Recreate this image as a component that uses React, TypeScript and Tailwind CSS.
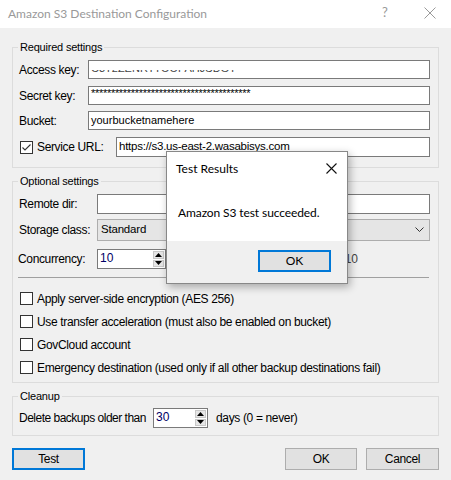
import React from "react";

const F = "font-['Liberation_Sans',Arial,sans-serif] text-[12px] tracking-[-0.35px]";

function Check({ checked = false }: { checked?: boolean }) {
  return (
    <div className="w-[13px] h-[13px] border border-[#333333] bg-white shrink-0 flex items-center justify-center">
      {checked && (
        <svg width="11" height="11" viewBox="0 0 11 11">
          <polyline points="1.5,5.5 4,8 9.5,2.5" fill="none" stroke="#333" strokeWidth="1.1" />
        </svg>
      )}
    </div>
  );
}

function Spin({ value, w }: { value: string; w: string }) {
  return (
    <div className={`${w} h-[20px] border border-[#7a7a7a] bg-white flex items-stretch shrink-0`}>
      <div className="flex-1 pl-[2px] pt-[2px] leading-[13px] text-[12px] tracking-normal text-[#000066]">{value}</div>
      <div className="w-[13px] flex flex-col gap-[1px] p-[1px]">
        <div className="flex-1 bg-[#e6e6e6] border border-[#c8c8c8] flex items-center justify-center">
          <svg width="7" height="4" viewBox="0 0 7 4"><polygon points="3.5,0 7,4 0,4" fill="#000" /></svg>
        </div>
        <div className="flex-1 bg-[#e6e6e6] border border-[#c8c8c8] flex items-center justify-center">
          <svg width="7" height="4" viewBox="0 0 7 4"><polygon points="0,0 7,0 3.5,4" fill="#000" /></svg>
        </div>
      </div>
    </div>
  );
}

function Group({ title, className, children }: { title: string; className: string; children: React.ReactNode }) {
  return (
    <div className={`relative ml-[12px] w-[427px] border border-[#dcdcdc] ${className}`}>
      <div className="absolute left-[5px] -top-[8px] px-[2px] bg-[#f0f0f0] leading-[14px] text-[11px] tracking-[-0.2px] text-black">{title}</div>
      {children}
    </div>
  );
}

function Button({ label, focused = false, w = "w-[73px]" }: { label: string; focused?: boolean; w?: string }) {
  return (
    <div
      className={`${w} h-[22px] flex items-center justify-center bg-[#e1e1e1] text-[12px] text-black ${
        focused ? "border-2 border-[#0078d7]" : "border border-[#adadad]"
      }`}
    >
      {label}
    </div>
  );
}

export default function App() {
  return (
    <div className={`relative w-[451px] h-[480px] bg-[#f0f0f0] overflow-hidden ${F} text-black`}>
      {/* Title bar */}
      <div className="h-[28px] bg-white flex items-center font-['Lato',sans-serif] text-[12px] tracking-normal text-[#999999]">
        <div className="pl-[8px] flex-1 -mt-[1px]">Amazon S3 Destination Configuration</div>
        <div className="w-[14px] text-[13px] text-[#999999] mr-[28px] -mt-[2px]">?</div>
        <svg width="12" height="12" viewBox="0 0 12 12" className="mr-[15px] -mt-[2px]">
          <path d="M0.5 0.5 L11.5 11.5 M11.5 0.5 L0.5 11.5" stroke="#9a9a9a" strokeWidth="1" />
        </svg>
      </div>

      {/* Required settings */}
      <Group title="Required settings" className="mt-[19px] h-[121px]">
        <div className="pt-[12px] pl-[6px] flex flex-col">
          <div className="flex items-center h-[19px]">
            <div className="w-[69px]">Access key:</div>
            <div className="w-[342px] h-[19px] border border-[#7a7a7a] bg-white pl-[2px] pt-[9px]">
              <div className="h-[3px] overflow-hidden">
                <div className="-mt-[8px] leading-[12px] text-[11px] tracking-normal text-[#444]">C3T2ZENRTTOOPAHJSDGT</div>
              </div>
            </div>
          </div>
          <div className="flex items-center h-[19px] mt-[7px]">
            <div className="w-[69px]">Secret key:</div>
            <div className="w-[342px] h-[19px] border border-[#7a7a7a] bg-white pl-[2px] leading-[12px] text-[11px] tracking-[-0.3px]">
              ****************************************
            </div>
          </div>
          <div className="flex items-center h-[19px] mt-[6px]">
            <div className="w-[69px]">Bucket:</div>
            <div className="w-[342px] h-[19px] border border-[#7a7a7a] bg-white pl-[2px] leading-[16px] text-[11px] tracking-normal">
              yourbucketnamehere
            </div>
          </div>
          <div className="flex items-center h-[20px] mt-[7px]">
            <div className="ml-[1px]"><Check checked /></div>
            <div className="ml-[4px] w-[79px]">Service URL:</div>
            <div className="w-[314px] h-[20px] border border-[#7a7a7a] bg-white pl-[2px] leading-[17px] text-[11.5px] tracking-[-0.25px]">
              https://s3.us-east-2.wasabisys.com
            </div>
          </div>
        </div>
      </Group>

      {/* Optional settings */}
      <Group title="Optional settings" className="mt-[13px] h-[202px]">
        <div className="pt-[12px] pl-[6px] flex flex-col">
          <div className="flex items-center h-[20px]">
            <div className="w-[78px]">Remote dir:</div>
            <div className="w-[333px] h-[20px] border border-[#7a7a7a] bg-white" />
          </div>
          <div className="flex items-center h-[22px] mt-[5px]">
            <div className="w-[78px]">Storage class:</div>
            <div className="w-[333px] h-[22px] border border-[#adadad] bg-[#e5e5e5] flex items-center pl-[3px] pr-[5px]">
              <div className="flex-1 text-[11.5px] tracking-[-0.2px]">Standard</div>
              <svg width="9" height="6" viewBox="0 0 9 6"><polyline points="0.5,0.5 4.5,4.5 8.5,0.5" fill="none" stroke="#333" strokeWidth="1" /></svg>
            </div>
          </div>
          <div className="flex items-center h-[20px] mt-[8px]">
            <div className="w-[78px] -ml-[1px] mr-[1px]">Concurrency:</div>
            <Spin value="10" w="w-[69px]" />
            <div className="w-[192px] text-right text-[#444444] tracking-normal">10</div>
          </div>
          <div className="w-[411px] h-[1px] bg-[#a0a0a0] mt-[8px] -ml-[1px]" />
          <div className="flex flex-col mt-[14px] gap-[10px]">
            {[
              "Apply server-side encryption (AES 256)",
              "Use transfer acceleration (must also be enabled on bucket)",
              "GovCloud account",
              "Emergency destination (used only if all other backup destinations fail)",
            ].map((t) => (
              <div key={t} className="flex items-center h-[13px]">
                <div className="ml-[1px]"><Check /></div>
                <div className="ml-[4px] whitespace-nowrap">{t}</div>
              </div>
            ))}
          </div>
        </div>
      </Group>

      {/* Cleanup */}
      <Group title="Cleanup" className="mt-[13px] h-[40px]">
        <div className="pt-[11px] pl-[6px] flex items-center">
          <div className="w-[134px] whitespace-nowrap tracking-[-0.5px]">Delete backups older than</div>
          <Spin value="30" w="w-[55px]" />
          <div className="ml-[8px]">days (0 = never)</div>
        </div>
      </Group>

      {/* Bottom buttons */}
      <div className="flex mt-[12px] pl-[12px]">
        <Button label="Test" focused />
        <div className="flex-1" />
        <Button label="OK" w="w-[72px]" />
        <div className="w-[9px]" />
        <Button label="Cancel" />
        <div className="w-[12px]" />
      </div>

      {/* Test Results dialog */}
      <div className="absolute left-[166px] top-[151px] w-[182px] h-[133px] border border-[#888888] bg-white shadow-[2px_3px_8px_rgba(0,0,0,0.3)] flex flex-col font-['Lato',sans-serif] tracking-normal text-[12px]">
        <div className="h-[33px] flex items-center pl-[9px] pr-[10px]">
          <div className="flex-1 mt-[1px]">Test Results</div>
          <svg width="11" height="11" viewBox="0 0 11 11">
            <path d="M0.5 0.5 L10.5 10.5 M10.5 0.5 L0.5 10.5" stroke="#111" strokeWidth="1.1" />
          </svg>
        </div>
        <div className="h-[56px] pl-[11px] pt-[19px] tracking-[-0.1px]">Amazon S3 test succeeded.</div>
        <div className="flex-1 bg-[#f0f0f0] flex items-start justify-end pt-[9px] pr-[16px]">
          <div className="w-[73px] h-[22px] border-2 border-[#0078d7] bg-[#e1e1e1] flex items-center justify-center">OK</div>
        </div>
      </div>
    </div>
  );
}
